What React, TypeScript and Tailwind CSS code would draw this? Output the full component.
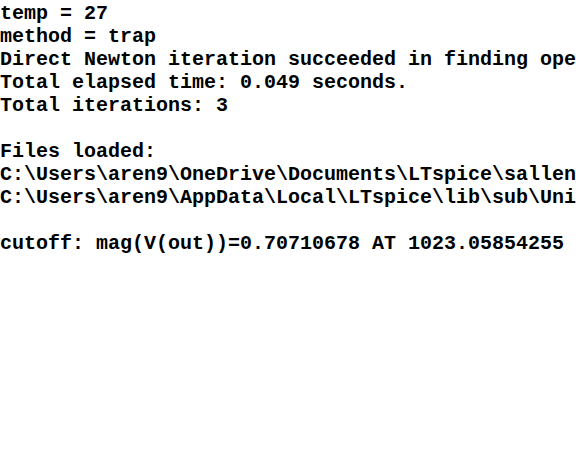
export default function App() {
  const lines = [
    "temp = 27",
    "method = trap",
    "Direct Newton iteration succeeded in finding operating point.",
    "Total elapsed time: 0.049 seconds.",
    "Total iterations: 3",
    "",
    "Files loaded:",
    "C:\\Users\\aren9\\OneDrive\\Documents\\LTspice\\sallen_key_lowpass.asc",
    "C:\\Users\\aren9\\AppData\\Local\\LTspice\\lib\\sub\\UniversalOpAmp2.lib",
    "",
    "cutoff: mag(V(out))=0.70710678 AT 1023.05854255",
  ];

  return (
    <div className="w-[576px] h-[476px] bg-white overflow-hidden pt-[2px]">
      <pre className="m-0 font-['Courier_New','Liberation_Mono',monospace] font-bold text-[20px] leading-[23px] text-black whitespace-pre">
        {lines.map((l, i) => (
          <div key={i} className="h-[23px]">{l}</div>
        ))}
      </pre>
    </div>
  );
}
